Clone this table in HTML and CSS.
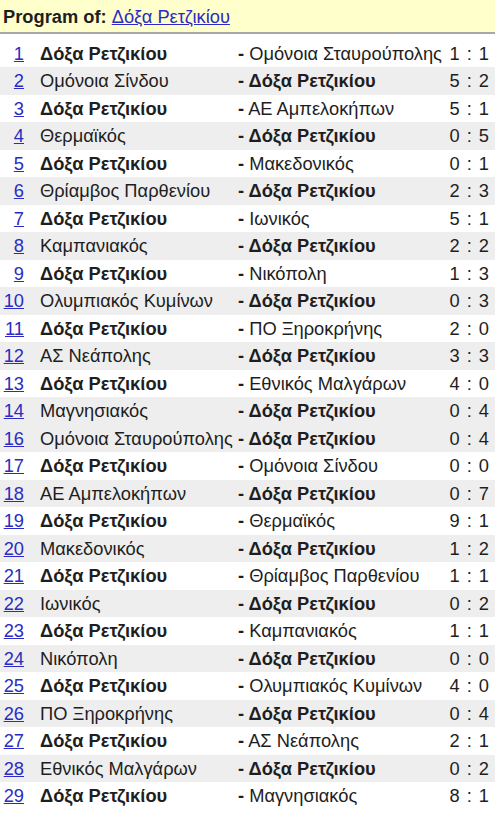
FILE: index.html
```html
<!DOCTYPE html>
<html lang="el">
  <head>
    <meta charset="UTF-8" />
    <meta name="viewport" content="width=device-width, initial-scale=1.0" />
    <title>Program</title>
    <link rel="stylesheet" href="styles.css">
  </head>
  <body>
    <div class="program-header">
      <span class="label">Program of:</span> <a href="#">Δόξα Ρετζικίου</a>
    </div>
    <table class="program">
      <tr><td class="num"><a href="#">1</a></td><td class="team home">Δόξα Ρετζικίου</td><td class="team away"><b>-</b> Ομόνοια Σταυρούπολης</td><td class="score">1 : 1</td></tr>
      <tr class="alt"><td class="num"><a href="#">2</a></td><td class="team">Ομόνοια Σίνδου</td><td class="team away home">- Δόξα Ρετζικίου</td><td class="score">5 : 2</td></tr>
      <tr><td class="num"><a href="#">3</a></td><td class="team home">Δόξα Ρετζικίου</td><td class="team away"><b>-</b> ΑΕ Αμπελοκήπων</td><td class="score">5 : 1</td></tr>
      <tr class="alt"><td class="num"><a href="#">4</a></td><td class="team">Θερμαϊκός</td><td class="team away home">- Δόξα Ρετζικίου</td><td class="score">0 : 5</td></tr>
      <tr><td class="num"><a href="#">5</a></td><td class="team home">Δόξα Ρετζικίου</td><td class="team away"><b>-</b> Μακεδονικός</td><td class="score">0 : 1</td></tr>
      <tr class="alt"><td class="num"><a href="#">6</a></td><td class="team">Θρίαμβος Παρθενίου</td><td class="team away home">- Δόξα Ρετζικίου</td><td class="score">2 : 3</td></tr>
      <tr><td class="num"><a href="#">7</a></td><td class="team home">Δόξα Ρετζικίου</td><td class="team away"><b>-</b> Ιωνικός</td><td class="score">5 : 1</td></tr>
      <tr class="alt"><td class="num"><a href="#">8</a></td><td class="team">Καμπανιακός</td><td class="team away home">- Δόξα Ρετζικίου</td><td class="score">2 : 2</td></tr>
      <tr><td class="num"><a href="#">9</a></td><td class="team home">Δόξα Ρετζικίου</td><td class="team away"><b>-</b> Νικόπολη</td><td class="score">1 : 3</td></tr>
      <tr class="alt"><td class="num"><a href="#">10</a></td><td class="team">Ολυμπιακός Κυμίνων</td><td class="team away home">- Δόξα Ρετζικίου</td><td class="score">0 : 3</td></tr>
      <tr><td class="num"><a href="#">11</a></td><td class="team home">Δόξα Ρετζικίου</td><td class="team away"><b>-</b> ΠΟ Ξηροκρήνης</td><td class="score">2 : 0</td></tr>
      <tr class="alt"><td class="num"><a href="#">12</a></td><td class="team">ΑΣ Νεάπολης</td><td class="team away home">- Δόξα Ρετζικίου</td><td class="score">3 : 3</td></tr>
      <tr><td class="num"><a href="#">13</a></td><td class="team home">Δόξα Ρετζικίου</td><td class="team away"><b>-</b> Εθνικός Μαλγάρων</td><td class="score">4 : 0</td></tr>
      <tr class="alt"><td class="num"><a href="#">14</a></td><td class="team">Μαγνησιακός</td><td class="team away home">- Δόξα Ρετζικίου</td><td class="score">0 : 4</td></tr>
      <tr class="alt"><td class="num"><a href="#">16</a></td><td class="team">Ομόνοια Σταυρούπολης</td><td class="team away home">- Δόξα Ρετζικίου</td><td class="score">0 : 4</td></tr>
      <tr><td class="num"><a href="#">17</a></td><td class="team home">Δόξα Ρετζικίου</td><td class="team away"><b>-</b> Ομόνοια Σίνδου</td><td class="score">0 : 0</td></tr>
      <tr class="alt"><td class="num"><a href="#">18</a></td><td class="team">ΑΕ Αμπελοκήπων</td><td class="team away home">- Δόξα Ρετζικίου</td><td class="score">0 : 7</td></tr>
      <tr><td class="num"><a href="#">19</a></td><td class="team home">Δόξα Ρετζικίου</td><td class="team away"><b>-</b> Θερμαϊκός</td><td class="score">9 : 1</td></tr>
      <tr class="alt"><td class="num"><a href="#">20</a></td><td class="team">Μακεδονικός</td><td class="team away home">- Δόξα Ρετζικίου</td><td class="score">1 : 2</td></tr>
      <tr><td class="num"><a href="#">21</a></td><td class="team home">Δόξα Ρετζικίου</td><td class="team away"><b>-</b> Θρίαμβος Παρθενίου</td><td class="score">1 : 1</td></tr>
      <tr class="alt"><td class="num"><a href="#">22</a></td><td class="team">Ιωνικός</td><td class="team away home">- Δόξα Ρετζικίου</td><td class="score">0 : 2</td></tr>
      <tr><td class="num"><a href="#">23</a></td><td class="team home">Δόξα Ρετζικίου</td><td class="team away"><b>-</b> Καμπανιακός</td><td class="score">1 : 1</td></tr>
      <tr class="alt"><td class="num"><a href="#">24</a></td><td class="team">Νικόπολη</td><td class="team away home">- Δόξα Ρετζικίου</td><td class="score">0 : 0</td></tr>
      <tr><td class="num"><a href="#">25</a></td><td class="team home">Δόξα Ρετζικίου</td><td class="team away"><b>-</b> Ολυμπιακός Κυμίνων</td><td class="score">4 : 0</td></tr>
      <tr class="alt"><td class="num"><a href="#">26</a></td><td class="team">ΠΟ Ξηροκρήνης</td><td class="team away home">- Δόξα Ρετζικίου</td><td class="score">0 : 4</td></tr>
      <tr><td class="num"><a href="#">27</a></td><td class="team home">Δόξα Ρετζικίου</td><td class="team away"><b>-</b> ΑΣ Νεάπολης</td><td class="score">2 : 1</td></tr>
      <tr class="alt"><td class="num"><a href="#">28</a></td><td class="team">Εθνικός Μαλγάρων</td><td class="team away home">- Δόξα Ρετζικίου</td><td class="score">0 : 2</td></tr>
      <tr><td class="num"><a href="#">29</a></td><td class="team home">Δόξα Ρετζικίου</td><td class="team away"><b>-</b> Μαγνησιακός</td><td class="score">8 : 1</td></tr>
    </table>
  </body>
</html>
```

FILE: styles.css
```css
body {
  font-family: "Liberation Sans", Arial, sans-serif;
  font-size: 18.3px;
  color: #1e1e1e;
  margin: 0;
  padding: 0;
  background-color: white;
}

a {
  color: #2b2bc4;
}

.program-header {
  box-sizing: border-box;
  height: 34px;
  background-color: #ffffcc;
  border-bottom: 2px solid #a8a8a8;
  padding: 6px 3px 0;
  line-height: 21px;
}

.program-header .label {
  font-weight: bold;
}

.program {
  border-collapse: collapse;
  table-layout: fixed;
  width: 495px;
  margin-top: 5.5px;
}

.program tr {
  height: 27.5px;
}

.program tr.alt {
  background-color: #eeeeee;
}

.program td {
  box-sizing: border-box;
  padding: 0;
  line-height: 21px;
  white-space: nowrap;
}

.program td.num {
  width: 40px;
  padding-right: 16px;
  text-align: right;
}

.program td.team {
  width: 198px;
}

.program td.away {
  width: 207px;
}

.home {
  font-weight: bold;
}

.program td.score {
  width: 50px;
  padding-right: 6px;
  text-align: right;
  word-spacing: 2px;
}
```
